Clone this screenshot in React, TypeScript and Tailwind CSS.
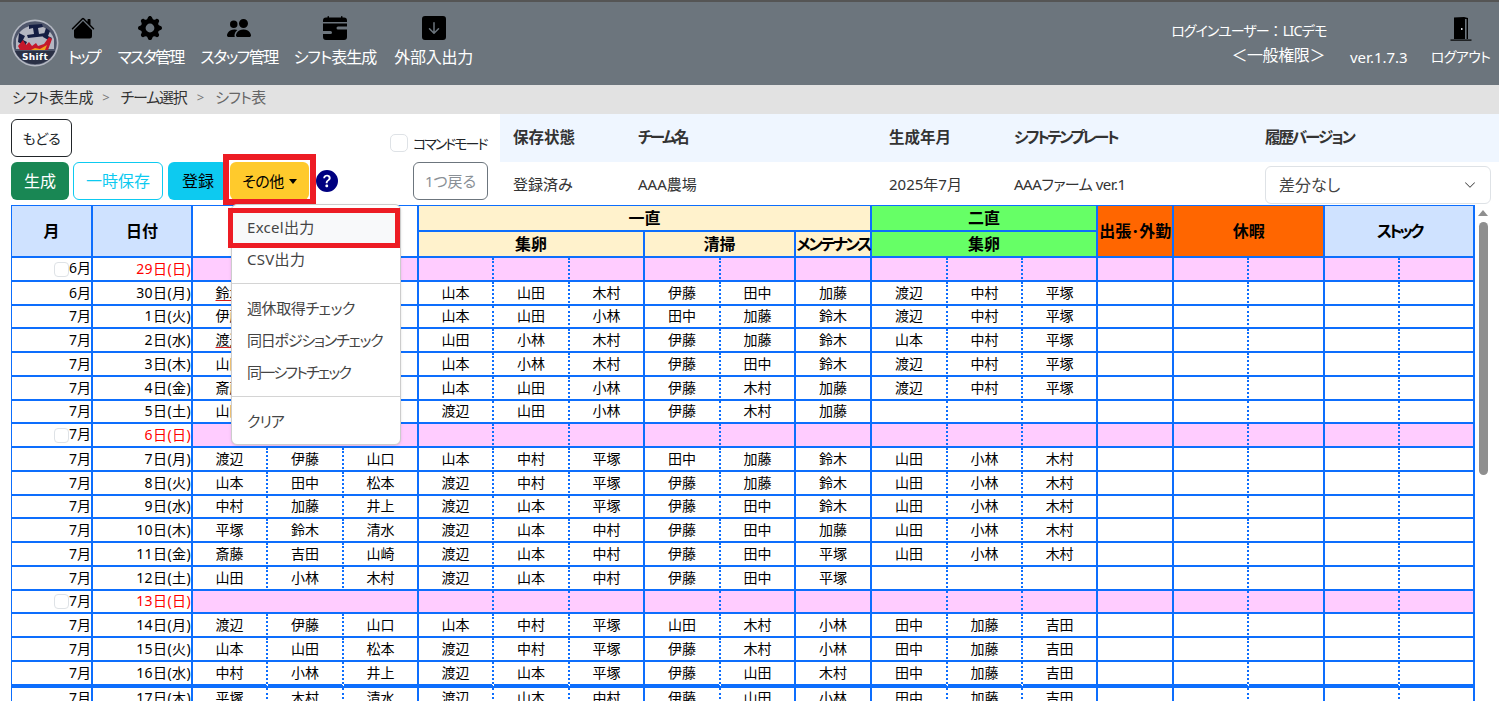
import { BsHouseFill, BsGearFill, BsPeopleFill, BsCalendarRangeFill, BsArrowDownSquareFill, BsQuestionCircleFill, BsChevronDown } from "react-icons/bs";

const navItems = [
    { name: "トップ", icon: BsHouseFill, cls: "tracking-[-3px]", gap: "" },
    { name: "マスタ管理", icon: BsGearFill, cls: "tracking-[-1.8px]", gap: "ml-[3px]" },
    { name: "スタッフ管理", icon: BsPeopleFill, cls: "tracking-[-1.5px]", gap: "ml-[1px]" },
    { name: "シフト表生成", icon: BsCalendarRangeFill, cls: "tracking-[-1px]", gap: "" },
    { name: "外部入出力", icon: BsArrowDownSquareFill, cls: "tracking-[-0.2px]", gap: "ml-[2px]" },
];

const colWidths = [81, 100, 75, 76, 75, 75, 76, 75, 76, 75, 76, 76, 75, 75, 76, 75, 76, 75, 75];

// null = 日曜(ピンク行)
const rows: { m: string; d: string; s: string[] | null }[] = [
    { m: "6月", d: "29日(日)", s: null },
    { m: "6月", d: "30日(月)", s: "鈴木 伊藤 山口 山本 山田 木村 伊藤 田中 加藤 渡辺 中村 平塚".split(" ") },
    { m: "7月", d: "1日(火)", s: "伊藤 田中 松本 山本 山田 小林 田中 加藤 鈴木 渡辺 中村 平塚".split(" ") },
    { m: "7月", d: "2日(水)", s: "渡辺 加藤 井上 山田 小林 木村 伊藤 加藤 鈴木 山本 中村 平塚".split(" ") },
    { m: "7月", d: "3日(木)", s: "山田 鈴木 清水 山本 小林 木村 伊藤 田中 鈴木 渡辺 中村 平塚".split(" ") },
    { m: "7月", d: "4日(金)", s: "斎藤 吉田 山崎 山本 山田 小林 伊藤 木村 加藤 渡辺 中村 平塚".split(" ") },
    { m: "7月", d: "5日(土)", s: "山田 小林 木村 渡辺 山田 小林 伊藤 木村 加藤 - - -".split(" ") },
    { m: "7月", d: "6日(日)", s: null },
    { m: "7月", d: "7日(月)", s: "渡辺 伊藤 山口 山本 中村 平塚 田中 加藤 鈴木 山田 小林 木村".split(" ") },
    { m: "7月", d: "8日(火)", s: "山本 田中 松本 渡辺 中村 平塚 伊藤 加藤 鈴木 山田 小林 木村".split(" ") },
    { m: "7月", d: "9日(水)", s: "中村 加藤 井上 渡辺 山本 平塚 伊藤 田中 鈴木 山田 小林 木村".split(" ") },
    { m: "7月", d: "10日(木)", s: "平塚 鈴木 清水 渡辺 山本 中村 伊藤 田中 加藤 山田 小林 木村".split(" ") },
    { m: "7月", d: "11日(金)", s: "斎藤 吉田 山崎 渡辺 山本 中村 伊藤 田中 平塚 山田 小林 木村".split(" ") },
    { m: "7月", d: "12日(土)", s: "山田 小林 木村 渡辺 山本 中村 伊藤 田中 平塚 - - -".split(" ") },
    { m: "7月", d: "13日(日)", s: null },
    { m: "7月", d: "14日(月)", s: "渡辺 伊藤 山口 山本 中村 平塚 山田 木村 小林 田中 加藤 吉田".split(" ") },
    { m: "7月", d: "15日(火)", s: "山本 山田 松本 渡辺 中村 平塚 伊藤 木村 小林 田中 加藤 吉田".split(" ") },
    { m: "7月", d: "16日(水)", s: "中村 小林 井上 渡辺 山本 平塚 伊藤 山田 木村 田中 加藤 吉田".split(" ") },
    { m: "7月", d: "17日(木)", s: "平塚 木村 清水 渡辺 山本 中村 伊藤 山田 小林 田中 加藤 吉田".split(" ") },
];

const solidAfter = [2, 5, 7, 8, 11];
const pinkSolid = [2, 4, 5, 8, 9, 11, 13];

const line = "border-r-2 border-b-2 border-[#0d6efd]";
const dotted = "[border-right-style:dotted]";
const headCell = "border-r-2 border-b-2 border-[#0d6efd] p-0 text-center font-bold text-[16px] leading-none text-black whitespace-nowrap";

function Logo() {
    return (
        <svg viewBox="0 0 48 48" className="w-12 h-12 shrink-0">
            <circle cx="24" cy="24" r="23.5" fill="#b4b8c2" />
            <circle cx="24" cy="24" r="21.8" fill="#4f566b" />
            <path d="M5 20a20 20 0 0 1 38 0v10H5z" fill="#d5d7de" opacity="0.75" />
            <path d="M18 6l13-1 1 3-5 1 1 6 6-1 1 3-18 2-1-3 7-1-1-6-4 1zM8 14l6 3-2 4 4 2-2 4-7-4zM35 9l4 3-2 5 4 2-2 3-7-4z" fill="#141d42" />
            <path d="M7 27l5-6 3 5 3-3 3 4 4-3 2 3 6-2 5-7 3 2-4 11H9z" fill="#c5182b" />
            <path d="M20 31l4-2 5 1 7-4-2 5z" fill="#eea21d" />
            <path d="M4 32h40a21.8 21.8 0 0 1-40 0z" fill="#2a3045" />
            <text x="24" y="41" textAnchor="middle" fontSize="9" fontWeight="700" letterSpacing="0.4" fill="#fff" fontFamily="'DejaVu Sans',sans-serif">Shift</text>
        </svg>
    );
}

function DoorIcon() {
    return (
        <svg viewBox="0 0 22 24" className="w-[22px] h-6">
            <path d="M4 0.5l10-0.5 4 1v21h-14z" fill="#000" />
            <rect x="15" y="2" width="1.6" height="20" fill="#6c757d" />
            <rect x="11" y="11" width="1.5" height="2" fill="#cfd3d8" />
            <rect x="0.5" y="22.5" width="21" height="1.2" fill="#000" />
        </svg>
    );
}

export default function App() {
    return (
        <div className="h-[708px] w-[1499px] overflow-hidden bg-white text-[#212529] font-[family-name:'Noto_Sans','Noto_Sans_CJK_JP',sans-serif] [font-feature-settings:'palt']">
            <header className="h-[85px] bg-[#6c757d] border-t-2 border-[#555] flex text-white text-[16px]">
                <div className="pl-[11px] pt-[17px] pr-[9px]">
                    <Logo />
                </div>
                <nav className="flex gap-[16px]">
                    {navItems.map((item) => (
                        <div key={item.name} className={`flex flex-col items-center pt-[14px] ${item.gap}`}>
                            <item.icon className="w-6 h-6 text-black" />
                            <span className={`mt-[5px] leading-[24px] whitespace-nowrap ${item.cls}`}>{item.name}</span>
                        </div>
                    ))}
                </nav>
                <div className="ml-auto flex">
                    <div className="flex flex-col items-end pt-[17px] text-[14px] leading-[24px]">
                        <span className="whitespace-nowrap">
                            <span className="tracking-[-1px]">ログインユーザー</span>
                            <span className="[font-feature-settings:'pwid'_0]">：</span>
                            <span className="tracking-[-0.6px]">LICデモ</span>
                        </span>
                        <span className="mr-[2px] text-[16px] tracking-[-0.4px]">＜一般権限＞</span>
                    </div>
                    <div className="ml-[23px] w-[57px] pt-[43px] text-[15px] leading-[24px] whitespace-nowrap">ver.1.7.3</div>
                    <div className="ml-[24px] w-[59px] mr-[9px] flex flex-col items-center pt-[15px] text-[14px]">
                        <DoorIcon />
                        <span className="mt-[4px] leading-[24px] whitespace-nowrap tracking-[-0.6px]">ログアウト</span>
                    </div>
                </div>
            </header>

            <div className="h-[29px] bg-[#e2e2e2] pl-[12px] pb-[4px] flex items-center text-[15px] text-[#333]">
                <span className="tracking-[-0.3px]">シフト表生成</span>
                <span className="mx-[9px] text-[13px] text-[#777]">&gt;</span>
                <span className="ml-[2px] tracking-[-1.2px]">チーム選択</span>
                <span className="mx-[10px] text-[13px] text-[#777]">&gt;</span>
                <span className="ml-[1px] text-[#666] tracking-[-0.6px]">シフト表</span>
            </div>

            <div className="flex h-[91px]">
                <div className="w-[500px] pl-[11px] pt-[5px] shrink-0">
                    <div className="flex h-[38px]">
                        <button className="w-[61px] h-[38px] border border-[#212529] rounded-md text-[14px] text-[#212529]">もどる</button>
                        <div className="ml-[318px] mt-[15px] flex items-center h-[18px]">
                            <span className="w-[18px] h-[18px] border border-[#dee2e6] rounded-[5px]"></span>
                            <span className="ml-[5px] text-[14px] whitespace-nowrap tracking-[-2px]">コマンドモード</span>
                        </div>
                    </div>
                    <div className="flex mt-[5px] h-[38px]">
                        <button className="w-[58px] h-[38px] bg-[#198754] rounded-md text-white text-[16px]">生成</button>
                        <button className="ml-[4px] w-[90px] h-[38px] border border-[#0dcaf0] rounded-md text-[#0dcaf0] text-[16px]">一時保存</button>
                        <button className="ml-[5px] w-[60px] h-[38px] bg-[#0dcaf0] rounded-md text-black text-[16px]">登録</button>
                        <div className="relative ml-[2px]">
                            <button className="w-[79px] h-[38px] bg-[#ffca2c] rounded-md text-black text-[15px] flex items-center justify-center tracking-[-0.5px]">
                                その他
                                <span className="ml-[5px] border-x-[4px] border-t-[5px] border-x-transparent border-t-black"></span>
                            </button>
                            <div className="absolute left-[-7px] top-[-8px] w-[93px] h-[51px] border-[6px] border-[#ed1c24]"></div>
                            <div className="absolute z-10 left-[1px] top-[42px] w-[170px] h-[241px] bg-white border border-[#ccc] rounded-md shadow-sm pt-[6px] text-[15px] text-[#444] whitespace-nowrap">
                                <div className="relative h-[32px] leading-[32px] px-[15px] bg-[#f8f9fa] tracking-[0.3px]">
                                    Excel出力
                                    <div className="absolute left-[-4px] top-[-3px] w-[172px] h-[40px] border-[5px] border-[#ed1c24]"></div>
                                </div>
                                <div className="h-[32px] leading-[32px] px-[15px] tracking-[0.3px]">CSV出力</div>
                                <div className="my-[8px] h-px bg-[#d4d4d4]"></div>
                                <div className="h-[32px] leading-[32px] px-[15px] tracking-[-0.4px]">週休取得チェック</div>
                                <div className="h-[32px] leading-[32px] px-[15px] tracking-[-1.2px]">同日ポジションチェック</div>
                                <div className="h-[32px] leading-[32px] px-[15px] tracking-[-1.8px]">同一シフトチェック</div>
                                <div className="my-[8px] h-px bg-[#d4d4d4]"></div>
                                <div className="h-[32px] leading-[32px] px-[15px] tracking-[-1px]">クリア</div>
                            </div>
                        </div>
                        <BsQuestionCircleFill className="ml-[7px] mt-[8px] w-[22px] h-[22px] text-[#000080]" />
                        <button className="ml-[75px] w-[75px] h-[38px] border border-[#6c757d] rounded-md text-[#8a9096] text-[15px]">1つ戻る</button>
                    </div>
                </div>
                <div className="flex-1 text-[15px]">
                    <div className="h-[48px] bg-[#eff6ff] pl-[13px] grid grid-cols-[125px_251px_125px_251px_1fr] items-center font-semibold text-[#333] text-[15.5px]">
                        <span>保存状態</span>
                        <span className="tracking-[-2.4px]">チーム名</span>
                        <span>生成年月</span>
                        <span className="tracking-[-2.5px]">シフトテンプレート</span>
                        <span className="tracking-[-2px]">履歴バージョン</span>
                    </div>
                    <div className="h-[43px] pl-[13px] grid grid-cols-[125px_251px_125px_251px_1fr] items-center text-[#333]">
                        <span className="mt-[2px]">登録済み</span>
                        <span className="mt-[2px]">AAA農場</span>
                        <span className="mt-[2px]">2025年7月</span>
                        <span className="mt-[2px] tracking-[-0.5px]">AAAファーム ver.1</span>
                        <div className="w-[226px] h-[38px] mt-[2px] border border-[#dee2e6] rounded-md pl-[13px] pr-[14px] flex items-center justify-between text-[16px] text-[#444]">
                            差分なし
                            <BsChevronDown className="w-[12px] h-[12px] text-[#333]" />
                        </div>
                    </div>
                </div>
            </div>

            <div className="flex h-[496px] pl-[11px] overflow-hidden">
                <div className="shrink-0">
                    <table className="table-fixed border-separate border-spacing-0 w-[1464px] border-t border-l border-[#0d6efd] text-[14px] text-black">
                        <colgroup>
                            {colWidths.map((w, i) => (
                                <col key={i} style={{ width: w }} />
                            ))}
                        </colgroup>
                        <thead>
                            <tr className="h-[26px]">
                                <th rowSpan={2} className={`${headCell} bg-[#cfe2ff] text-[15px]`}>月</th>
                                <th rowSpan={2} className={`${headCell} bg-[#cfe2ff] text-[15px]`}>日付</th>
                                <th rowSpan={2} colSpan={3} className={`${headCell} bg-white`}></th>
                                <th colSpan={6} className={`${headCell} bg-[#fff2cc]`}>一直</th>
                                <th colSpan={3} className={`${headCell} bg-[#66ff66]`}>二直</th>
                                <th rowSpan={2} className={`${headCell} bg-[#ff6600]`}>出張･外勤</th>
                                <th rowSpan={2} colSpan={2} className={`${headCell} bg-[#ff6600]`}>休暇</th>
                                <th rowSpan={2} colSpan={2} className={`${headCell} bg-[#cfe2ff] border-r tracking-[-3px]`}>ストック</th>
                            </tr>
                            <tr className="h-[26px]">
                                <th colSpan={3} className={`${headCell} bg-[#fff2cc]`}>集卵</th>
                                <th colSpan={2} className={`${headCell} bg-[#fff2cc]`}>清掃</th>
                                <th className={`${headCell} bg-[#fff2cc] tracking-[-2.4px]`}>メンテナンス</th>
                                <th colSpan={3} className={`${headCell} bg-[#66ff66]`}>集卵</th>
                            </tr>
                        </thead>
                        <tbody>
                            {rows.map((r, ri) => {
                                const isLast = r.d === "16日(水)";
                                const thick = isLast ? "border-b-4" : "";
                                const off = r.s === null;
                                return (
                                    <tr key={ri} className={isLast ? "h-[25.75px]" : "h-[23.75px]"}>
                                        <td className={`${line} ${thick} p-0 text-right leading-none`}>
                                            {off && <span className="inline-block align-middle w-[15px] h-[15px] border border-[#dee2e6] rounded-[4px] bg-white"></span>}
                                            {r.m}
                                        </td>
                                        <td className={`${line} ${thick} p-0 text-right leading-none tracking-[0.4px] ${off ? "text-[#ff0000]" : ""}`}>{r.d}</td>
                                        {off && <td colSpan={3} className={`${line} bg-[#ffccff] p-0`}></td>}
                                        {off &&
                                            Array.from({ length: 14 }).map((_, i) => (
                                                <td key={i} className={`${line} bg-[#ffccff] p-0 ${pinkSolid.includes(i) ? "" : dotted} ${i === 13 ? "border-r" : ""}`}></td>
                                            ))}
                                        {!off &&
                                            r.s!.map((name, i) => {
                                                const empty = name === "-";
                                                const mark = i === 0 && (r.d === "30日(月)" || r.d === "2日(水)");
                                                return (
                                                    <td key={i} className={`${line} ${thick} p-0 text-center leading-none ${solidAfter.includes(i) ? "" : dotted}`}>
                                                        {empty ? "" : <span className={mark ? "underline decoration-[#d01c1c] underline-offset-2" : ""}>{name}</span>}
                                                    </td>
                                                );
                                            })}
                                        {!off &&
                                            Array.from({ length: 5 }).map((_, i) => (
                                                <td key={i} className={`${line} ${thick} p-0 ${i === 1 || i === 3 ? dotted : ""} ${i === 4 ? "border-r" : ""}`}></td>
                                            ))}
                                    </tr>
                                );
                            })}
                        </tbody>
                    </table>
                </div>
                <div className="ml-[3px] w-[10px] pt-[5px] flex flex-col items-center">
                    <span className="border-x-[5px] border-b-[6px] border-x-transparent border-b-[#8f8f8f]"></span>
                    <div className="mt-[6px] w-[9px] h-[253px] rounded-full bg-[#8f8f8f]"></div>
                </div>
            </div>
        </div>
    );
}
